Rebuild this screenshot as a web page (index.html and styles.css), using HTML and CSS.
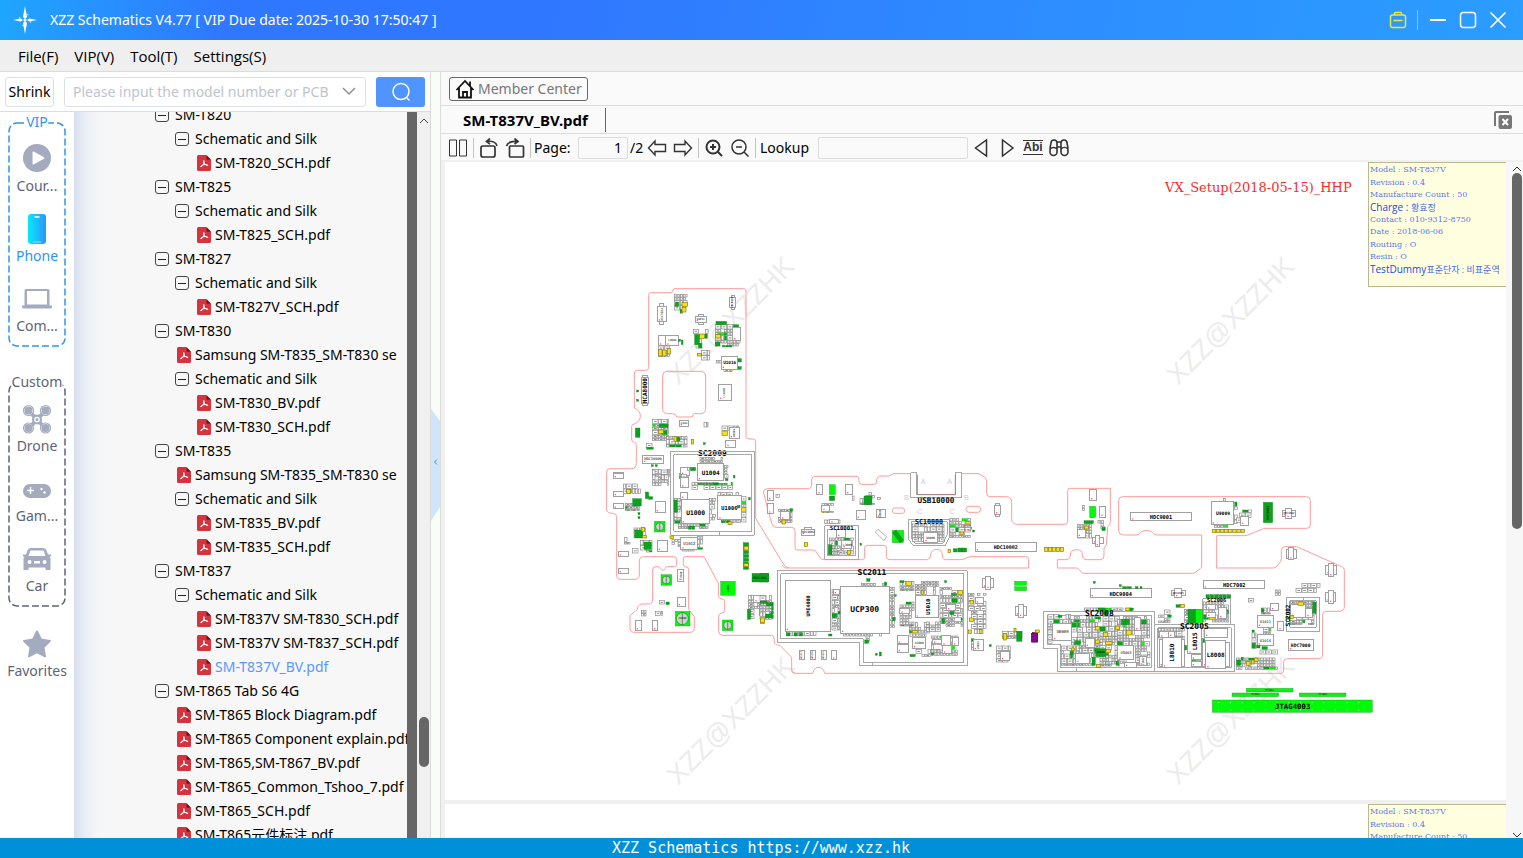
FILE: index.html
```html
<!DOCTYPE html>
<html lang="en">
<head>
<meta charset="utf-8">
<title>XZZ Schematics V4.77</title>
<link rel="stylesheet" href="styles.css">
</head>
<body>
<svg class="defs" aria-hidden="true">
  <symbol id="pdf" viewBox="0 0 14 16"><path d="M1.500 0H9l5 5v9.500a1.500 1.500 0 0 1-1.500 1.500h-11A1.500 1.500 0 0 1 0 14.500v-13A1.500 1.500 0 0 1 1.500 0z" fill="#d5343f"/><path d="M9.500 0 14 4.800H10.500a1 1 0 0 1-1-1z" fill="#7d0f16"/><path d="M6.800 5.500c.8 3-1 6-3 6.300-.9-.7 1.200-1.900 3.200-2.200 2-.4 4 .1 3.800.8-.7.700-3.300-.8-3.900-3.200z" fill="none" stroke="#fff"/></symbol>
</svg>
<div class="app">
  <header class="titlebar">
    <svg class="logo" width="24" height="28" viewBox="0 0 24 28"><circle cx="12" cy="14" r="6" fill="none" stroke="#bfe4ff" stroke-dasharray="5 4.400" stroke-dashoffset="2"/><path d="M12 0l2 11-2 2-2-2zM12 28l2-11-2-2-2 2zM0 14l8-1.500L10 14l-2 1.500zM24 14l-8-1.500L14 14l2 1.500z" fill="#fff"/><circle cx="12" cy="14" r="1.500" fill="#fff"/></svg>
    <h1 class="title">XZZ Schematics V4.77 [ VIP Due date: 2025-10-30 17:50:47 ]</h1>
    <button class="win" aria-label="Toolbox"><svg width="18" height="18" viewBox="0 0 18 18" fill="none" stroke="#ece83a" stroke-width="1.500"><rect x="1.500" y="4" width="15" height="12.500" rx="2"/><path d="M5.500 4V2.500a1 1 0 0 1 1-1h5a1 1 0 0 1 1 1V4M4.500 9.500h9"/></svg></button>
    <span class="win-sep"></span>
    <button class="win" aria-label="Minimize"><svg width="18" height="18" viewBox="0 0 18 18"><path d="M1 9h16" stroke="#fff" stroke-width="2"/></svg></button>
    <button class="win" aria-label="Maximize"><svg width="18" height="18" viewBox="0 0 18 18"><rect x="1.500" y="1.500" width="15" height="15" rx="3" fill="none" stroke="#fff" stroke-width="1.500"/></svg></button>
    <button class="win" aria-label="Close"><svg width="18" height="18" viewBox="0 0 18 18"><path d="M1.500 1.500l15 15M16.500 1.500l-15 15" stroke="#fff" stroke-width="1.700"/></svg></button>
  </header>
  <nav class="menubar"><button>File(F)</button><button>VIP(V)</button><button>Tool(T)</button><button>Settings(S)</button></nav>

  <main class="main">
    <section class="side">
      <form class="search">
        <button type="button" class="shrink">Shrink</button>
        <label class="combo"><input type="text" aria-label="Model number or PCB" placeholder="Please input the model number or PCB"><svg width="14" height="9" viewBox="0 0 14 9"><path d="M1 1l6 6 6-6" fill="none" stroke="#8d9095" stroke-width="1.500"/></svg></label>
        <button type="button" class="go" aria-label="Search"><svg width="20" height="20" viewBox="0 0 20 20" fill="none" stroke="#fff" stroke-width="1.500"><circle cx="10" cy="9.500" r="8"/><path d="M15.500 15.500l3 3"/></svg></button>
      </form>
      <div class="side-body">
        <nav class="cats">
          <section class="cat-group vip">
            <svg class="dash"><rect/></svg><h2>VIP</h2>
            <button class="cat"><svg viewBox="0 0 30 30"><circle cx="15" cy="14" r="14" fill="#a4abbf"/><path d="M10.500 8.500v11a1 1 0 0 0 1.500.8l10-5.500a1 1 0 0 0 0-1.600L12 7.700a1 1 0 0 0-1.500.8z" fill="#fff"/></svg><span>Cour...</span></button>
            <button class="cat on"><svg viewBox="0 0 30 30"><defs><linearGradient id="ph"><stop stop-color="#08e9fb"/><stop offset="1" stop-color="#2b95f8"/></linearGradient></defs><rect x="6" y="0" width="18" height="30" rx="3" fill="url(#ph)"/><path d="M12.500 3h5" stroke="#fff" stroke-width="1.500"/><path d="M11 28h8" stroke="#8fe6ff"/></svg><span>Phone</span></button>
            <button class="cat"><svg viewBox="0 0 30 30"><path d="M2.500 6.500A1.500 1.500 0 0 1 4 5h22a1.500 1.500 0 0 1 1.500 1.500V21.500H30V23a1.500 1.500 0 0 1-1.500 1.500h-27A1.500 1.500 0 0 1 0 23v-1.500h2.500zM5 7v13.500h20V7z" fill="#a4abbf" fill-rule="evenodd"/></svg><span>Com...</span></button>
          </section>
          <section class="cat-group custom">
            <svg class="dash"><rect/></svg><h2>Custom</h2>
            <button class="cat"><svg viewBox="0 0 30 30"><path d="M7 7l16 17M23 7L7 24" stroke="#a4abbf" stroke-width="4"/><g fill="#fff" stroke="#a4abbf" stroke-width="1.200"><circle cx="6.500" cy="6.500" r="5"/><circle cx="23.500" cy="6.500" r="5"/><circle cx="6.500" cy="24" r="5"/><circle cx="23.500" cy="24" r="5"/></g><g fill="#a4abbf"><circle cx="6.500" cy="6.500" r="4"/><circle cx="23.500" cy="6.500" r="4"/><circle cx="6.500" cy="24" r="4"/><circle cx="23.500" cy="24" r="4"/><circle cx="15" cy="15.500" r="5"/></g><circle cx="15" cy="15.500" r="2.200" fill="none" stroke="#fff" stroke-width="1.300"/></svg><span>Drone</span></button>
            <button class="cat"><svg viewBox="0 0 30 30"><rect x="1" y="10" width="28" height="14" rx="7" fill="#a4abbf"/><path d="M5 16.500h7M8.500 13v7" stroke="#fff" stroke-width="1.500"/><circle cx="19.500" cy="15" r="1.200" fill="#fff"/><circle cx="22.500" cy="18.500" r="1.200" fill="#fff"/></svg><span>Gam...</span></button>
            <button class="cat"><svg viewBox="0 0 30 30"><path fill-rule="evenodd" fill="#a4abbf" d="M9 4h12a3.500 3.500 0 0 1 3.500 2.500L26 10.500h3v2h-1.500l1 2V26h-5v-2.500h-17V26h-5V14.500l1-2H1v-2h3l1.500-4A3.500 3.500 0 0 1 9 4zM8.500 6.500L6.500 12h17l-2-5.500zM7.500 16a2 2 0 1 0 .1 4 2 2 0 0 0-.1-4zM22.500 16a2 2 0 1 0 .1 4 2 2 0 0 0-.1-4zM12 17v2.500h6V17z"/></svg><span>Car</span></button>
          </section>
          <button class="cat fav"><svg viewBox="0 0 30 30"><path d="M15 2.500l4 8 9 1.400-6.500 6.400 1.500 9-8-4.200-8 4.200 1.500-9L2 11.900l9-1.400z" fill="#a4abbf" stroke="#a4abbf" stroke-width="2" stroke-linejoin="round"/></svg><span>Favorites</span></button>
        </nav>
        <div class="tree-wrap"><div class="tree" id="tree"></div></div>
        <div class="inner-bar"></div>
        <div class="scroll"><svg class="up" width="10" height="6" viewBox="0 0 10 6"><path d="M1 5l4-4 4 4" fill="none" stroke="#444"/></svg><i class="thumb"></i></div>
      </div>
    </section>
    <div class="split"><svg width="9" height="112" viewBox="0 0 9 112"><path d="M0 0l9 12v86L0 112z" fill="#cfe5fb"/><path d="M6 50.500L3.500 53 6 55.500" fill="none" stroke="#3f8fe0"/></svg></div>

    <section class="viewer">
      <div class="home-row"><a class="member" href="#member"><svg width="20" height="20" viewBox="0 0 20 20" fill="none" stroke="#111" stroke-width="1.800"><path d="M1.500 11L10 2l8.500 9M4 9v9.500h12V9M8 18.500V13h4v5.500M15 7V2.500"/></svg>Member Center</a></div>
      <div class="tabs"><button class="tab">SM-T837V_BV.pdf</button><button class="close-all" aria-label="Close all"><svg width="18" height="18" viewBox="0 0 18 18"><path d="M1 15V2a1 1 0 0 1 1-1h13" fill="none" stroke="#777" stroke-width="2"/><rect x="4.500" y="4" width="13.500" height="14" rx="2" fill="#777"/><path d="M8.500 8l5.500 6M14 8l-5.500 6" stroke="#fff" stroke-width="2"/></svg></button></div>
      <div class="toolbar">
        <button class="tool" aria-label="Two pages"><svg viewBox="0 0 20 20"><path d="M1.500 2h7v16h-7zM11.500 2h7v16h-7z"/></svg></button>
        <i class="sep"></i>
        <button class="tool" aria-label="Rotate left"><svg viewBox="0 0 20 20" stroke-width="1.700"><rect x="2" y="8" width="14" height="11" rx="2"/><path d="M8 3.500c5-.8 9 1 10 4.500M11 .5L7.500 3.500 11 6"/></svg></button>
        <button class="tool" aria-label="Rotate right"><svg viewBox="0 0 20 20" stroke-width="1.700"><rect x="4.500" y="8" width="14" height="11" rx="1"/><path d="M12.500 3.500c-5-.8-10 1-11 4.500M9.500 .5L13 3.500 9.500 6"/></svg></button>
        <i class="sep"></i>
        <label class="page-label" for="page">Page:</label><input id="page" class="field page-no" type="text" value="1"><span class="total">/2</span>
        <button class="tool" aria-label="Previous page"><svg viewBox="0 0 20 20" stroke-width="1.400"><path d="M1.500 10L8 3v3.500h10.500v7H8V17z"/></svg></button>
        <button class="tool" aria-label="Next page"><svg viewBox="0 0 20 20" stroke-width="1.400"><path d="M18.500 10L12 3v3.500H1.500v7H12V17z"/></svg></button>
        <i class="sep"></i>
        <button class="tool" aria-label="Zoom in"><svg viewBox="0 0 20 20" stroke-width="2"><circle cx="9" cy="9" r="6.500"/><path d="M13.500 13.500L18 18M9 6v6M6 9h6"/></svg></button>
        <button class="tool" aria-label="Zoom out"><svg viewBox="0 0 20 20" stroke-width="1.500"><circle cx="9" cy="9" r="7"/><path d="M14 14l4.500 4.500M6 9h6"/></svg></button>
        <i class="sep"></i>
        <label class="look-label" for="look">Lookup</label><input id="look" class="field look" type="text">
        <button class="tool" aria-label="Find previous"><svg viewBox="0 0 20 20" stroke-width="1.500"><path d="M15.500 2v16L4.500 10z"/></svg></button>
        <button class="tool" aria-label="Find next"><svg viewBox="0 0 20 20" stroke-width="1.500"><path d="M5.500 2v16l10.500-8z"/></svg></button>
        <button class="tool abi"><span>Abi</span></button>
        <button class="tool" aria-label="Search text"><svg viewBox="0 0 20 20" stroke-width="1.600"><path d="M2 5a3 3 0 0 1 6 0v9a3.500 3.500 0 0 1-7 0c0-3 0-6 1-9zM12 5a3 3 0 0 1 6 0c1 3 1 6 1 9a3.500 3.500 0 0 1-7 0zM8 4h4M8 9h4M1 11c2-2 5-2 7 0M12 11c2-2 5-2 7 0"/></svg></button>
      </div>
      <div class="doc">
        <div class="pages">
          <article class="sheet first">
            <svg id="board" class="board" viewBox="445 162 1061 638"></svg>
            <ul class="note"><li>Model : SM-T837V</li><li>Revision : 0.4</li><li>Manufacture Count : 50</li><li class="strong">Charge : <span>황효정</span></li><li>Contact : 010-9312-8750</li><li>Date : 2018-06-06</li><li>Routing : O</li><li>Resin : O</li><li class="strong">TestDummy<span>표준단자 : 비표준역</span></li></ul>
          </article>
          <article class="sheet second">
            <ul class="note"><li>Model : SM-T837V</li><li>Revision : 0.4</li><li>Manufacture Count : 50</li><li class="strong">Charge : <span>황효정</span></li><li>Contact : 010-9312-8750</li><li>Date : 2018-06-06</li><li>Routing : O</li><li>Resin : O</li><li class="strong">TestDummy<span>표준단자 : 비표준역</span></li></ul>
          </article>
        </div>
        <div class="doc-scroll"><svg width="10" height="6" viewBox="0 0 10 6"><path d="M1 5l4-4 4 4" fill="none" stroke="#333"/></svg><i class="thumb"></i><svg width="10" height="6" viewBox="0 0 10 6"><path d="M1 1l4 4 4-4" fill="none" stroke="#333"/></svg></div>
      </div>
    </section>
  </main>
  <footer class="status">XZZ Schematics https://www.xzz.hk</footer>
</div>
<script src="board.js"></script>
</body>
</html>
```
FILE: styles.css
```css
* { box-sizing: border-box; }
body { margin: 0; font: 14px/20px "Noto Sans", "Noto Sans CJK SC", sans-serif; color: #000; }
button, input { font: inherit; color: inherit; }
button { border: 0; background: none; padding: 0; display: flex; align-items: center; justify-content: center; }
h1, h2, ul { margin: 0; padding: 0; font: inherit; list-style: none; }
.defs { position: absolute; width: 0; height: 0; }
.app { height: 100vh; display: flex; flex-direction: column; overflow: hidden; }

.titlebar { flex: none; height: 40px; display: flex; align-items: center; padding: 0 10px 0 13px; color: #fff; background: linear-gradient(100deg, #1fa6fd 0, #3077ff 15%, #3077ff 36%, #2d91ff 75%, #2b9dff 100%); }
.title { flex: 1; margin-left: 13px; }
.win { width: 30px; height: 40px; }
.win-sep { width: 1px; height: 20px; margin: 0 5px 0 4px; background: #83c3ff; }
.menubar { flex: none; height: 32px; display: flex; align-items: center; gap: 16px; padding: 1px 18px 0; background: #efefef; border-bottom: 1px solid #dcdcdc; font: 15px/20px "Open Sans", sans-serif; }

.main { flex: 1; min-height: 0; display: flex; }
.side { flex: none; width: 431px; display: flex; flex-direction: column; border-right: 1px solid #dcdcdc; background: #fff; }
.search { flex: none; height: 40px; display: flex; align-items: center; padding: 0 5px; border-bottom: 1px solid #dcdcdc; }
.shrink { width: 49px; height: 30px; border: 1px solid #dcdfe6; border-radius: 3px; }
.combo { flex: 1; height: 30px; margin: 0 10px; display: flex; align-items: center; padding: 0 9px 0 8px; border: 1px solid #dcdfe6; border-radius: 3px; }
.combo input { flex: 1; min-width: 0; border: 0; padding: 0; outline: 0; background: none; }
.combo input::placeholder { color: #c0c4cc; }
.go { width: 49px; height: 30px; border-radius: 3px; background: #4f94ff; }
.side-body { flex: 1; min-height: 0; display: flex; }

.cats { flex: none; width: 74px; padding: 10px 8px 0; overflow: hidden; }
.cat-group { position: relative; display: flex; flex-direction: column; gap: 18px; padding: 22px 0 11px; color: #5c6478; }
.cat-group.custom { margin-top: 35px; }
.cat-group h2 { position: absolute; top: -10px; left: 50%; transform: translateX(-50%); background: #fff; }
.vip h2 { color: #2d95f5; }
.dash { position: absolute; inset: 0; width: 100%; height: 100%; }
.dash rect { x: 1px; y: 1px; width: calc(100% - 2px); height: calc(100% - 2px); rx: 8px; fill: none; stroke: #5c6478; stroke-width: 1.500; stroke-dasharray: 7 3; }
.vip .dash rect { stroke: #2d95f5; }
.cat { position: relative; width: 100%; flex-direction: column; gap: 2px; color: #5c6478; }
.cat svg { width: 30px; height: 30px; }
.cat.on { color: #2d95f5; }
.fav { margin-top: 22px; }

.tree-wrap { flex: 1; min-width: 0; overflow: hidden; background: linear-gradient(90deg, #d7dfee 0, #e9edf4 10px, #f5f6f7 24px, #f7f7f7 30px); }
.tree { margin-top: -9px; padding-left: 81px; white-space: nowrap; }
.row { display: flex; align-items: center; height: 24px; }
.row.d1 { padding-left: 20px; }
.row.d2 { padding-left: 40px; }
.toggle { width: 14px; height: 14px; margin-right: 6px; border: 1px solid #444; border-radius: 3px; }
.toggle::before { content: ""; width: 8px; height: 1px; background: #222; }
.row svg { width: 14px; height: 16px; margin: 0 4px 0 2px; flex: none; }
.row a { color: inherit; text-decoration: none; }
.row a.on { color: #5b96ff; }
.inner-bar { flex: none; width: 10px; background: #666; }
.scroll { flex: none; width: 13px; background: #f0f0f0; position: relative; }
.scroll .up { position: absolute; top: 6px; left: 2px; }
.scroll .thumb { position: absolute; top: 83.400%; left: 2px; width: 10px; height: 50px; border-radius: 5px; background: #666; }

.split { flex: none; width: 9px; background: #f8fdf6; display: flex; align-items: center; padding-top: 20px; }

.viewer { flex: 1; min-width: 0; display: flex; flex-direction: column; border-left: 1px solid #dcdcdc; background: #fafafa; }
.home-row { flex: none; height: 34px; display: flex; align-items: center; padding-left: 8px; border-bottom: 1px solid #dcdcdc; }
.member { display: flex; align-items: center; gap: 3px; height: 24px; padding: 0 5px; border: 1px solid #666; border-radius: 3px; color: #777; text-decoration: none; }
.tabs { flex: none; height: 28px; display: flex; align-items: center; justify-content: space-between; padding-right: 11px; border-bottom: 1px solid #dcdcdc; }
.tab { height: 24px; padding: 0 17px 0 22px; border-right: 1px solid #666; font-weight: 700; font-size: 15px; }
.toolbar { flex: none; height: 28px; display: flex; align-items: center; padding: 1px 0 0 4px; border-bottom: 2px solid #f0f0f0; }
.tool { flex: none; width: 26px; height: 24px; }
.tool svg { width: 20px; height: 20px; fill: none; stroke: #333; }
.sep { width: 1px; height: 20px; margin: 0 2px; background: #c4c4c4; }
.page-label { width: 45px; padding-left: 1px; }
.look-label { width: 60px; padding-left: 2px; }
.field { height: 22px; border: 1px solid #dcdcdc; border-radius: 2px; background: #fafafa; padding: 0 5px; }
.page-no { width: 50px; text-align: right; }
.total { width: 16px; padding-left: 2px; }
.look { width: 150px; }
.abi span { border-top: 1px solid #333; border-bottom: 1px solid #333; font: 700 12px/13px "Liberation Sans", sans-serif; color: #333; }

.doc { flex: 1; min-height: 0; display: flex; padding-left: 4px; background: #f0f0f0; }
.pages { flex: 1; min-width: 0; overflow: hidden; }
.sheet { position: relative; background: #fff; overflow: hidden; }
.sheet.second { margin-top: 4px; height: 400px; }
.board { display: block; width: 100%; height: auto; }
.note { position: absolute; top: 0; right: 0; width: 138px; height: 125px; padding: 1px 0 10px 1px; display: grid; grid-auto-rows: 1fr; align-items: center; overflow: hidden; border: 1px solid #b9b98e; border-right: 0; background: #ffffdf; color: #5a78ee; font: 8px/12px "DejaVu Serif", serif; white-space: nowrap; }
.note .strong { color: #2448e8; font: 10px/11px "Open Sans", "Noto Sans CJK KR", sans-serif; }
.note .strong span { color: #4a68ea; font-size: 9px; }
.doc-scroll { flex: none; width: 17px; padding: 4px 1px 0 5px; display: flex; flex-direction: column; align-items: center; background: #f7f7f7; }
.doc-scroll .thumb { width: 10px; height: 356px; margin: 1px 0 auto; border-radius: 5px; background: #666; }
.status { flex: none; height: 20px; padding-right: 1px; background: #0090da; color: #fff; text-align: center; font: 15px/20px "DejaVu Sans Mono", monospace; }

.outline { fill: none; stroke: #ff9c9c; stroke-width: 3; }
.can { fill: none; stroke: #a8a8a8; stroke-width: 3; shape-rendering: crispEdges; }
.part { fill: #fff; stroke: #a0a0a0; stroke-width: 3; shape-rendering: crispEdges; }
.chip { fill: #fff; stroke: #888; stroke-width: 2; }
.lime { fill: #00fa0a; stroke: #178a17; stroke-width: 1; }
.green { fill: #0aa31e; stroke: #0b7b12; stroke-width: 1; }
.yellow { fill: #f4e020; stroke: #8a7d10; stroke-width: 2; }
.purple { fill: #850a8c; stroke: #5a045f; stroke-width: 2; }
.pin { fill: #ff5ca8; }
.lbl { fill: #000; font-family: "DejaVu Sans Mono", monospace; text-anchor: middle; dominant-baseline: central; }
.port { fill: #ccc; font: 22px "Liberation Sans", sans-serif; }
.mark { fill: #ececec; font: 27px "Liberation Sans", sans-serif; }
.rev { fill: #ff2a2a; font: 13px "DejaVu Serif", serif; }
```
FILE: board.js
```js
// File tree: "level|kind|name", kind g = group, f = file, s = selected file
const rows = `0|g|SM-T820
1|g|Schematic and Silk
2|f|SM-T820_SCH.pdf
0|g|SM-T825
1|g|Schematic and Silk
2|f|SM-T825_SCH.pdf
0|g|SM-T827
1|g|Schematic and Silk
2|f|SM-T827V_SCH.pdf
0|g|SM-T830
1|f|Samsung SM-T835_SM-T830 se
1|g|Schematic and Silk
2|f|SM-T830_BV.pdf
2|f|SM-T830_SCH.pdf
0|g|SM-T835
1|f|Samsung SM-T835_SM-T830 se
1|g|Schematic and Silk
2|f|SM-T835_BV.pdf
2|f|SM-T835_SCH.pdf
0|g|SM-T837
1|g|Schematic and Silk
2|f|SM-T837V SM-T830_SCH.pdf
2|f|SM-T837V SM-T837_SCH.pdf
2|s|SM-T837V_BV.pdf
0|g|SM-T865 Tab S6 4G
1|f|SM-T865 Block Diagram.pdf
1|f|SM-T865 Component explain.pdf
1|f|SM-T865,SM-T867_BV.pdf
1|f|SM-T865_Common_Tshoo_7.pdf
1|f|SM-T865_SCH.pdf
1|f|SM-T865元件标注.pdf`.split('\n').map(r => r.split('|'));
document.getElementById('tree').innerHTML = rows.map(([d, k, name]) =>
  `<div class="row d${d}">` + (k === 'g'
    ? `<button class="toggle" aria-label="Collapse"></button><span>${name}</span>`
    : `<svg><use href="#pdf"/></svg><a href="#"${k === 's' ? ' class="on"' : ''}>${name}</a>`) + '</div>').join('');

// Board regions; each has its own origin and is drawn at three units per page unit.
const regions = [
{ at: [600, 280],
  outline: 'M467 510V486Q467 478 460 477H446Q438 476 438 470V34Q438 26 432 26H222L214 38H152Q146 38 146 46V262Q146 271 138 271H112Q103 271 103 282V384Q121 392 121 408T103 432Q95 432 95 440V478Q95 487 103 487Q109 488 109 496V550Q109 565 95 566H30Q20 566 20 576M199 274H305Q317 276 317 288V385Q317 400 303 401H283Q278 401 278 411H230Q228 401 218 401H202Q188 400 188 388V288Q188 275 199 274Z',
  fill: '223 44 40 58;280 148 46 14;288 162 36 44;346 134 76 66;305 212 26 32;175 198 38 36;158 418 50 70;200 470 64 36;366 438 52 34;158 568 52 32;340 242 28 10;372 268 26 12;238 580 30 18;312 428 14 16;140 490 20 18',
  part: '172 80 27 46;180 72 12 8;180 126 12 8;389 52 18 30;394 46 10 6;394 82 10 6;286 110 33 18;296 103 14 7;296 128 14 7;176 166 22 32;198 166 38 32;364 230 50 38;398 142 24 40;124 292 22 80;128 286 14 6;128 372 14 6;356 314 38 47;238 422 28 18;388 442 30 34;378 482 28 20;128 526 62 24;40 579 30 18;242 564 26 22',
  green: '226 66 10 14;240 88 8 10;284 164 14 30;348 124 32 10;346 186 14 12;106 444 14 28;140 502 20 6;368 196 30 5;414 236 10 10;414 260 10 8;230 472 10 12;178 432 26 10;110 330 6 6;110 358 6 6;296 190 10 14;154 554 6 6;166 554 6 6;310 488 6 6;244 180 5 14;236 178 6 6',
  yellow: '246 68 16 12;246 82 12 14;176 208 10 20;188 210 10 18;202 206 10 16;292 220 12 8;346 164 16 10;222 470 8 14;274 478 7 14;176 450 14 10',
  label: 'HDC7004|186|103|9|-90;HDC8000|398|67|8|-90;HCA8000|135|332|18|-90;U1016|389|249|13;SC2009|337|520|24;HDC10000|159|538|11;U9011|302|119|8;L0004|217|182|8;LC4000|375|338|8|-90;D8005|403|459|8|-90;Z4005|252|431|7' },
{ at: [600, 450],
  outline: 'M20 66V180Q22 190 40 190Q50 192 50 200V375Q50 388 62 388H105Q118 388 118 375V330Q120 320 130 320H220Q230 320 230 328V345Q228 350 220 350H200Q196 350 196 356Q188 366 182 356Q180 350 174 350H168Q158 350 158 360V450Q158 462 145 462H125Q112 465 112 478L90 497V535Q90 547 105 547H270Q283 547 283 535V500L266 478V358Q266 350 255 350Q250 348 250 340V325Q250 320 256 320H312L356 402V440Q358 447 366 447Q374 448 374 455V480Q374 490 362 490Q356 492 356 500V545Q358 556 368 556H515Q523 557 523 575Q523 586 540 586L575 622V662Q577 670 585 670M467 0V205L552 345Q556 353 566 353',
  can: 'M212 4H463V256H212ZM221 14H455V244H221ZM358 244V256',
  fill: '158 60 50 50;276 98 124 22;224 146 24 76;328 146 20 66;424 140 16 80;364 210 60 12;236 222 90 16;300 22 70 18;374 46 12 40;244 74 22 40;262 52 28 12;354 128 66 12;70 102 54 30;76 160 46 24;102 234 36 30;122 272 36 36;74 262 20 22;216 268 28 24;292 260 18 40;446 436 70 76;248 296 52 10;98 296 20 16;124 482 16 18;166 484 24 14;178 452 28 12',
  part: '40 70 30 16;40 124 30 16;40 161 30 16;292 42 80 50;244 150 84 72;354 138 70 72;243 262 50 38;166 154 30 34;172 272 30 32;234 360 18 34;232 442 26 28;55 305 30 16;55 355 30 16;106 512 18 30;158 512 16 30;242 84 24 30;242 128 20 20;462 436 26 22;480 466 30 30',
  lime: '163 214 32 32;183 374 32 32;226 484 44 44;362 394 44 42;367 510 32 32',
  green: '456 370 50 26;430 278 16 82;136 126 10 20;146 140 12 8;98 146 26 22;104 240 24 24;132 276 22 22;222 150 10 36;294 100 90 4;400 76 5 8;412 166 8 8;114 188 6 6;114 200 6 6;364 212 26 6;442 478 10 30;512 458 8 50;266 228 8 10;276 228 8 10;446 142 5 8;198 456 10 8;376 86 8 6',
  yellow: '432 290 14 10;432 340 14 10;80 118 12 12;124 232 10 12;128 256 12 8;384 216 12 8;210 258 10 8;482 504 12 16',
  disc: '179 230 12;199 390 12;247 506 18;383 526 12',
  label: 'U1004|332|68|18;U1000|287|187|19;U1006|388|175|16;U1012|268|281|12;HDC4001|481|383|10;L1501|385|415|8|-90;J8000|247|506|8;U8005|495|481|8;L7008|244|377|8|-90' },
{ at: [760, 460],
  outline: 'M900 193H770Q755 190 755 178V128Q755 110 740 110H690Q680 110 680 100V62Q678 50 668 48L655 41H605M452 41H400L388 48H360Q350 50 350 60V65Q350 73 342 73H305Q297 73 297 65V58Q297 49 288 49H165Q155 49 155 60V75Q155 86 145 86H22Q10 88 10 96L35 190Q38 201 48 202H95Q105 203 105 212V262Q105 270 112 270H160Q168 270 170 278L180 293Q184 299 192 299H308Q314 298 314 290V265Q314 256 322 256H372Q379 256 379 264V290Q380 299 390 299H500Q512 298 512 285Q514 268 530 268T547 285Q548 299 556 299H606L630 290H796Q806 290 806 298V324H75L66 316M95 630Q96 640 108 640H158Q162 622 176 622T194 640H810M404 144H428Q434 144 434 152T428 160H404Q397 160 397 152T404 144ZM626 139H654Q662 140 662 148T654 157H626Q618 156 618 148T626 139Z',
  can: 'M52 332H622V618H300V547H52ZM62 342H612V608H310V536H62ZM337 608V618M194 198H296V298H194ZM204 208H286V288H204ZM446 178H570V226L556 258H462L446 240ZM454 186H562V222L550 250H466L454 236ZM452 38H470V104H586V38H605V114H452Z',
  fill: '56 148 42 42;186 130 36 30;194 180 48 12;208 234 74 50;300 98 46 38;260 108 24 16;344 112 20 12;458 192 96 54;570 176 64 58;216 388 24 124;388 382 18 124;250 520 116 10;304 370 78 10;420 364 44 30;466 364 76 42;540 382 70 120;448 488 62 34;420 426 44 74;500 486 44 30;412 526 36 54;450 568 92 26;514 528 82 60;450 522 50 12;80 514 110 16;626 400 54 110;634 536 10 40;710 558 44 50;728 514 60 26;626 508 48 14;48 94 12 20;206 258 34 30;318 528 12 22;0 408 24 24;0 438 36 44',
  part: '23 92 18 30;23 132 18 30;171 74 17 30;257 74 20 30;62 154 28 26;186 138 22 16;210 178 26 14;124 208 40 18;134 203 20 5;289 152 28 26;349 148 28 26;704 138 18 26;708 132 10 6;708 164 10 6;646 247 184 28;76 362 135 152;242 380 146 140;466 406 70 68;458 532 40 34;230 210 26 22;246 242 28 24;492 218 40 30;668 356 34 28;678 350 14 38;766 440 34 28;776 434 14 38;640 538 32 34;722 576 28 26;118 572 16 28;151 572 16 28;184 572 16 28;215 572 16 28;646 414 26 18;220 388 20 16;420 446 30 16;518 538 28 14;546 528 26 30;578 532 18 26;548 558 28 24;412 526 34 26;412 554 34 24;560 434 28 18',
  lime: '208 74 18 30;397 211 34 37;764 364 36 12;764 380 36 12',
  green: '0 340 26 26;208 108 16 14;312 108 24 26;420 362 12 6;574 400 16 6;580 266 12 10;594 264 12 12;606 264 14 12;206 254 10 30;234 454 6 8;220 466 6 6;300 250 5 6;90 146 8 8;770 514 16 30;546 476 8 14;570 454 12 10;314 540 12 10;346 580 6 6;358 576 6 12;80 518 10 10;102 518 10 10;118 518 10 10;206 522 10 6;638 210 6 6;398 472 8 10;404 404 5 5;554 362 6 6;688 554 6 6;20 428 18 10;16 462 18 12;320 356 10 8;374 366 6 10',
  yellow: '133 248 9 12;66 180 10 12;262 272 10 12;564 268 8 10;600 216 10 8;630 422 10 10;628 474 12 10;658 508 8 12;730 520 10 20;762 506 6 10;2 474 12 14;626 510 8 10',
  purple: '818 518 14 28',
  extra: '<path class="chip" d="M346 216l8-8 26 22-8 12z"/><path class="green" d="M398 218l10-8 22 30-10 8z"/><path d="M472 104V44M472 104H586V44" stroke="#b08080" stroke-width="3" fill="none"/><g class="port"><text x="482" y="72">A</text><text x="562" y="72">A</text><text x="432" y="121">B</text><text x="612" y="121">B</text><text x="471" y="161">C</text><text x="569" y="161">C</text></g><path d="M612 196h22v14h-22z" fill="none" stroke="#e44" stroke-width="3" stroke-dasharray="8 5"/>',
  label: 'USB10000|528|121|23;SC10001|245|203|17;SC10000|507|185|20;SC2011|336|337|24;UCP300|314|450|24;UME4000|145|438|15|-90;U5010|504|440|16|-90;HDC10002|737|261|15;HDC9002|145|217|9;L3009|262|256|9;U8006|512|234|9;U1060|478|548|9;HDC|12|353|9;U9005|363|161|8|-90;U3003|656|556|8|-90;C5007|126|584|7|-90;C5008|159|584|7|-90;C5009|192|584|7|-90' },
{ at: [1030, 470],
  outline: 'M0 610H755Q761 608 761 600V575Q761 566 772 566H865Q878 566 878 555V435Q878 425 888 424H930Q943 422 943 410V300Q943 293 935 290L805 232Q800 230 792 230H765Q755 230 754 242V265Q754 275 748 280L738 291Q735 294 728 294H560V197H648L696 178Q700 175 706 175H830Q841 175 841 165V92Q841 80 830 80H278Q266 80 266 92V183Q268 195 280 195H318Q328 195 332 187Q350 175 368 187Q372 195 382 195H515V288Q515 294 510 296L495 308Q492 310 486 310H160Q155 309 152 304L145 296Q142 294 136 294H82V269H108Q121 268 121 255Q122 239 140 239T157 255Q158 269 170 269H212Q222 269 222 258V235L229 225L233 170Q241 165 241 155V55H120Q113 55 113 62V155Q113 163 105 163H90',
  can: 'M40 424H374V604H82V535H40ZM52 436H364V594H92V525H52ZM139 594V604M374 464H614V604H374ZM384 474H604V594H384ZM518 386H602V464H518ZM769 382H869V484H769ZM779 392H859V472H779ZM820 382V392',
  fill: '54 434 70 30;54 462 14 60;124 440 90 90;94 528 64 60;148 526 90 66;210 440 60 150;262 440 98 90;262 540 30 46;316 528 46 64;146 414 160 10;386 420 40 40;464 418 54 42;386 476 80 30;520 396 78 62;522 476 72 26;484 550 32 42;142 164 44 42;204 152 22 30;158 106 8 32;536 166 60 8;614 96 10 66;620 120 46 40;580 86 30 9;666 480 14 60;700 472 24 22;690 540 54 14;620 564 124 36;646 386 46 12;736 360 18 20;798 340 74 30;782 394 76 72;694 414 30 20;718 384 16 14',
  part: '179 60 20 32;210 110 18 32;142 178 26 24;188 202 32 20;196 196 14 34;302 127 182 26;544 95 68 70;758 122 38 18;768 117 18 28;769 238 32 28;777 232 14 38;888 288 32 26;896 282 14 38;888 368 30 28;896 362 14 38;520 331 184 26;181 357 184 26;424 362 42 16;434 357 20 26;68 462 58 50;264 528 48 42;388 508 76 82;398 502 56 92;474 474 40 78;518 518 80 72;528 512 60 84;524 476 70 26;776 508 75 34;682 438 48 34;682 494 48 34;722 402 24 20;744 456 18 26;782 404 44 38;828 416 20 26;632 140 24 26;138 550 40 30;390 484 26 20;416 486 18 16;566 414 24 32;530 404 26 16;530 428 26 14;484 554 30 16;484 574 30 16;166 506 28 26;314 444 18 38;328 560 22 28;284 578 36 14',
  lime: '179 109 18 34;547 690 480 37;606 669 140 11;649 655 140 11;808 669 140 11;497 418 20 42',
  green: '700 97 28 61;162 152 28 9;197 536 30 24;274 448 12 16;286 448 12 16;474 418 22 42;528 374 76 10;278 350 12 6;292 350 12 6;316 350 8 6;330 350 6 6;268 344 6 6;190 334 6 6;84 436 12 6;134 512 18 12;120 544 10 10;186 562 10 24;204 414 22 8;438 404 12 8;216 172 10 10;848 396 10 34;620 570 12 16;666 520 10 14;680 526 10 8;464 526 6 14;258 574 8 12;222 422 10 14;634 562 6 8;518 506 6 10;770 442 12 6;694 416 8 10;300 414 10 8;696 530 16 8',
  yellow: '44 232 58 12;547 179 98 9;163 168 12 9;804 396 16 10;16 480 12 8;228 538 14 10;196 470 12 10;196 510 12 10;220 488 12 12;256 468 12 10;124 534 10 8;286 414 12 8;452 404 12 8;650 574 10 12;664 570 8 12;674 564 10 10;200 584 12 8;226 514 20 10;780 436 10 10',
  purple: '4 490 18 26',
  extra: '<path d="M565 698H1012M565 720H1012" stroke="#c8ffc8" stroke-width="3" stroke-dasharray="3 32" fill="none"/>',
  label: 'SC2008|208|430|24;SC2005|493|469|24;SC2006|560|391|16;SC2002|773|436|18|-90;U9009|579|132|14;HDC9001|393|141|16;HDC9004|272|371|16;HDC7002|613|344|16;HDC7000|812|526|14;JTAG4003|788|710|22;U6009|98|485|12;U5003|288|548|11;L8010|426|548|18|-90;L8015|494|514|18|-90;L8008|557|555|18;HDC9003|714|128|10|-90;HDC9002|777|131|8;HDC8003|445|371|8;U1011|706|456|11;U1014|706|513|11;Q6004|212|548|8;TP4001|718|661|7;TP4002|676|675|7;TP4003|878|675|7;L1002|340|574|8|-90' }
];

let seed = 11;
const rnd = () => (seed = (seed * 16807) % 2147483647) / 2147483647;
const list = s => s ? s.split(';').map(r => r.split(/[ |]/)) : [];
const rect = (cls, [x, y, w, h]) => `<rect class="${cls}" x="${x}" y="${y}" width="${w}" height="${h}"/>`;

// Long narrow colour strips are rows of equal pads.
function strip(cls, box) {
  const [x, y, w, h] = box.map(Number);
  if (w > 4 * h) {
    const n = Math.round(w / 12);
    return Array.from({ length: n }, (_, i) => rect(cls, [x + i * w / n, y, w / n - 2, h])).join('');
  }
  if (h > 4 * w) {
    const n = Math.round(h / 12);
    return Array.from({ length: n }, (_, i) => rect(cls, [x, y + i * h / n, w, h / n - 2])).join('');
  }
  return rect(cls, box);
}

// Fills an area with small passives laid on a loose grid.
function passives([x, y, w, h]) {
  let out = '';
  x = +x; y = +y; w = +w; h = +h;
  for (let cy = y; cy < y + h - 4;) {
    const ch = Math.min(rnd() < .5 ? 9 : 15, y + h - cy);
    for (let cx = x; cx < x + w - 4;) {
      const cw = Math.min(rnd() < .4 ? 9 : 18, x + w - cx);
      const k = rnd();
      if (k > .16) {
        out += rect(k > .95 ? 'green' : k > .935 ? 'yellow' : k > .915 ? 'lime' : 'chip', [cx, cy, cw - 2, ch - 2]);
        if (k < .915 && cw > 9) out += `<path d="M${cx + 4} ${cy + ch / 2 - 1}h${cw - 10}" stroke="#555" stroke-width="2"/>`;
      }
      cx += cw;
    }
    cy += ch;
  }
  return out;
}

let svg = '';
for (const [x, y] of [[678, 386], [1178, 386], [678, 786], [1178, 786]])
  svg += `<text class="mark" transform="translate(${x} ${y}) rotate(-45)">XZZ@XZZHK</text>`;
svg += '<text class="rev" x="1165" y="192">VX_Setup(2018-05-15)_HHP</text>';
for (const r of regions) {
  svg += `<g transform="translate(${r.at}) scale(.33333)"><path class="outline" d="${r.outline}"/>`;
  if (r.can) svg += `<path class="can" d="${r.can}"/>`;
  svg += list(r.fill).map(passives).join('');
  svg += list(r.part).map(p => rect('part', p) + (p[2] > 12 && p[3] > 12 ? `<rect class="pin" x="${+p[0] + 4}" y="${+p[1] + +p[3] - 8}" width="4" height="4"/>` : '')).join('');
  svg += list(r.lime).map(p => rect('lime', p)).join('');
  for (const c of ['green', 'yellow', 'purple']) svg += list(r[c]).map(p => strip(c, p)).join('');
  svg += list(r.disc).map(([x, y, d]) => `<circle cx="${x}" cy="${y}" r="${d}" fill="#c8d8c8" stroke="#178a17" stroke-width="2"/><path d="M${x} ${y - d}v${2 * d}" stroke="#555" stroke-width="2"/>`).join('');
  svg += r.extra || '';
  svg += list(r.label).map(([t, x, y, s, a]) => `<text class="lbl" font-size="${s}"${+s > 12 ? ' font-weight="700"' : ''} transform="translate(${x} ${y}) rotate(${a || 0})">${t}</text>`).join('');
  svg += '</g>';
}
document.getElementById('board').innerHTML = svg;
```
